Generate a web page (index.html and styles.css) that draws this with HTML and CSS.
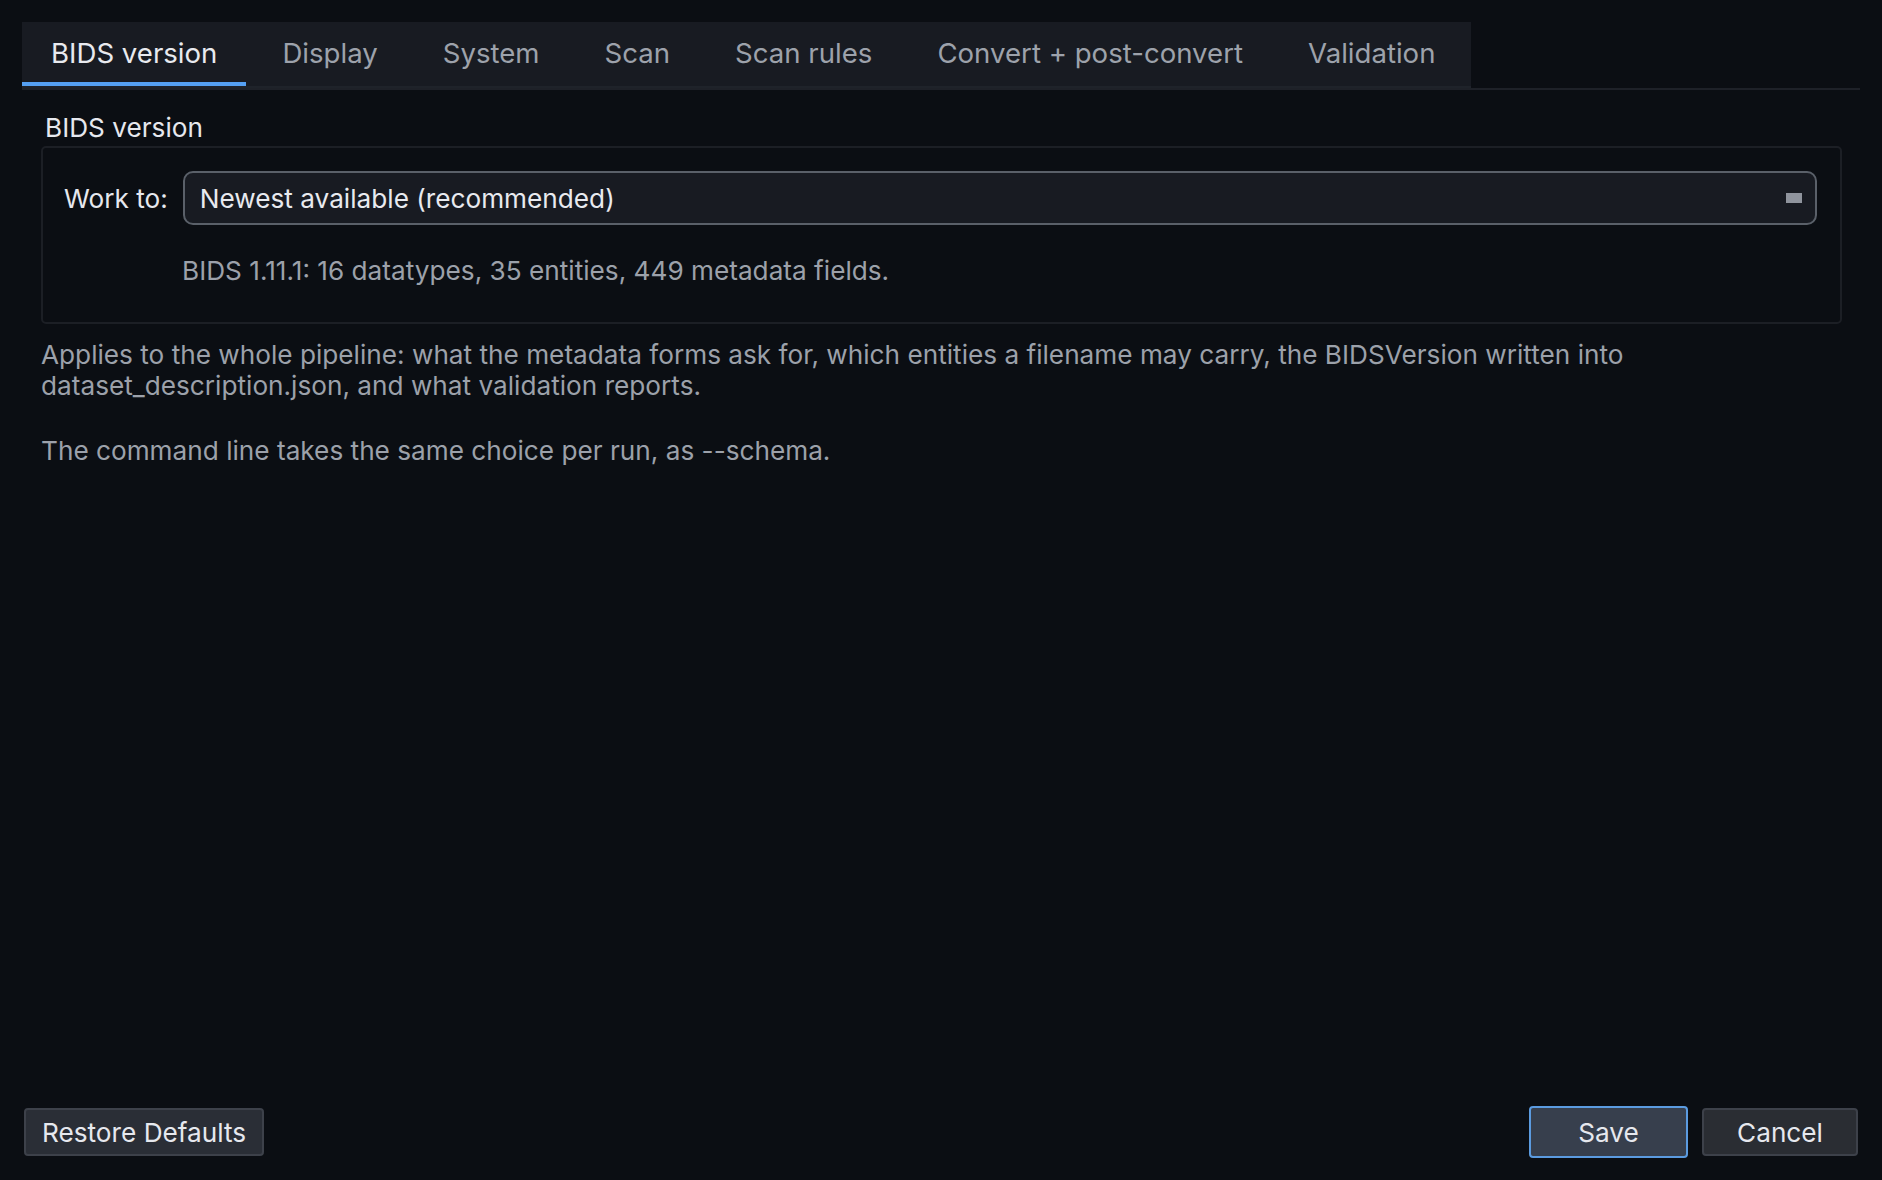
FILE: index.html
```html
<!DOCTYPE html>
<html lang="en">
<head>
<meta charset="utf-8">
<title>Settings</title>
<link rel="stylesheet" href="styles.css">
</head>
<body>
<div class="dialog">
  <div class="tabbar">
    <div class="tabs">
      <div class="tab active">BIDS version</div>
      <div class="tab">Display</div>
      <div class="tab">System</div>
      <div class="tab">Scan</div>
      <div class="tab">Scan rules</div>
      <div class="tab">Convert + post-convert</div>
      <div class="tab">Validation</div>
    </div>
  </div>
  <div class="pane">
    <div class="group-title">BIDS version</div>
    <div class="group">
      <div class="row">
        <label class="label">Work to:</label>
        <div class="combo">
          <span class="combo-text">Newest available (recommended)</span>
          <span class="combo-ind"></span>
        </div>
      </div>
      <div class="info">BIDS 1.11.1: 16 datatypes, 35 entities, 449 metadata fields.</div>
    </div>
    <p class="para">Applies to the whole pipeline: what the metadata forms ask for, which entities a filename may carry, the BIDSVersion written into dataset_description.json, and what validation reports.</p>
    <p class="para">The command line takes the same choice per run, as --schema.</p>
  </div>
  <div class="footer">
    <button class="btn">Restore Defaults</button>
    <div class="spacer"></div>
    <button class="btn primary">Save</button>
    <button class="btn cancel">Cancel</button>
  </div>
</div>
</body>
</html>
```

FILE: styles.css
```css
html, body {
  margin: 0;
  padding: 0;
  background: #0b0e13;
  height: 100%;
}
body {
  font-family: Inter, Roboto, "Liberation Sans", sans-serif;
  font-size: 26.2px;
  color: #e6e8ee;
}
.dialog {
  height: 1180px;
  box-sizing: border-box;
  display: flex;
  flex-direction: column;
  padding: 22px 22px 22px 22px;
}
.tabbar {
  display: flex;
  border-bottom: 2px solid #1e2128;
}
.tabs {
  display: flex;
  gap: 7px;
  padding-right: 7px;
  background: #181b22;
  height: 66px;
  box-sizing: border-box;
  border-bottom: 2px solid #1f232a;
}
.tab {
  height: 64px;
  box-sizing: border-box;
  display: flex;
  align-items: center;
  padding: 2px 29px 0 29px;
  font-size: 27.6px;
  color: #9da2ab;
  white-space: nowrap;
  border-bottom: 4px solid transparent;
}
.tab.active {
  color: #e8eaef;
  border-bottom-color: #55a0f3;
}
.pane {
  display: flex;
  flex-direction: column;
  padding: 0 18px 0 19px;
}
.group-title {
  margin-top: 22px;
  margin-left: 4px;
  line-height: 32px;
  height: 34px;
}
.group {
  border: 2px solid #1c1f25;
  border-radius: 5px;
  padding: 23px 23px 0 21px;
  height: 178px;
  box-sizing: border-box;
}
.row {
  display: flex;
  align-items: center;
  gap: 15px;
}
.label {
  color: #e6e8ee;
  white-space: nowrap;
}
.combo {
  flex: 1;
  height: 54px;
  box-sizing: border-box;
  border: 2px solid #5a6069;
  border-radius: 10px;
  background: #181b22;
  display: flex;
  align-items: center;
  padding: 0 13px 0 15px;
}
.combo-text {
  flex: 1;
  color: #e8eaef;
}
.combo-ind {
  width: 16px;
  height: 10px;
  background: #8f949d;
}
.info {
  margin-top: 30px;
  margin-left: 118px;
  color: #9ca1aa;
  line-height: 32px;
}
.para {
  margin: 15px 0 34px 0;
  color: #9ca1aa;
  line-height: 31px;
  max-width: 1660px;
}
.para + .para {
  margin-top: 0;
}
.footer {
  margin-top: auto;
  display: flex;
  align-items: center;
  padding-left: 2px;
}
.spacer { flex: 1; }
.btn {
  font-family: inherit;
  font-size: 26.2px;
  color: #e6e8ee;
  background: #2a2e36;
  border: 2px solid #3d414a;
  border-radius: 4px;
  height: 48px;
  padding: 0 16px;
  cursor: default;
}
.btn.primary {
  background: #373f4d;
  border-color: #5b9be0;
  height: 52px;
  width: 159px;
  margin-right: 14px;
}
.btn.cancel {
  background: #2a2d33;
  width: 156px;
  margin-right: 2px;
}
```
